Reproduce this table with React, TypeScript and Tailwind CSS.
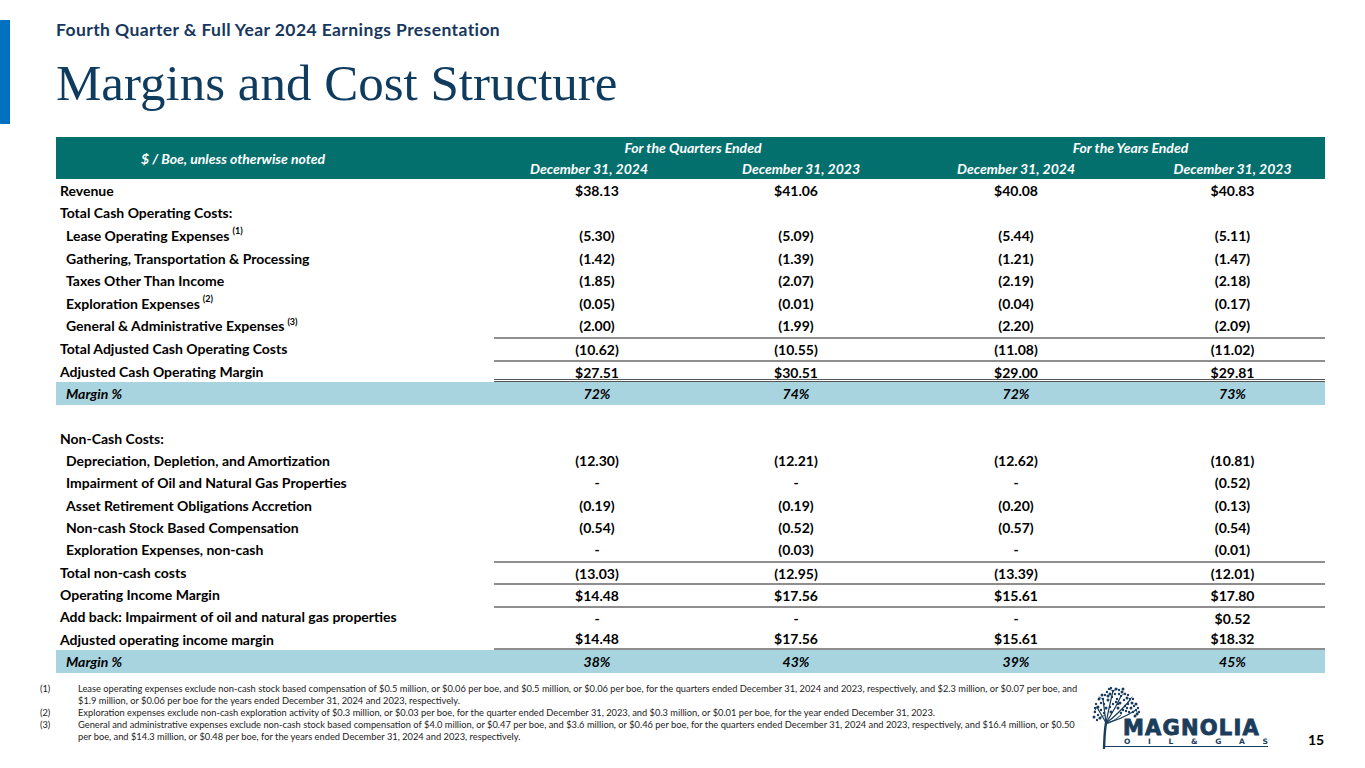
import React from "react";

type Row =
  | { kind: "data"; label: string; sup?: string; indent?: boolean; vals: string[]; top?: boolean; dbl?: boolean; bottom?: boolean; h: string }
  | { kind: "band"; vals: string[]; h: string }
  | { kind: "blank"; h: string };

const A = "h-[22.6px]";
const B = "h-[22.3px]";

const rows: Row[] = [
  { kind: "data", label: "Revenue", vals: ["$38.13", "$41.06", "$40.08", "$40.83"], h: A },
  { kind: "data", label: "Total Cash Operating Costs:", vals: ["", "", "", ""], h: A },
  { kind: "data", label: "Lease Operating Expenses", sup: "(1)", indent: true, vals: ["(5.30)", "(5.09)", "(5.44)", "(5.11)"], h: A },
  { kind: "data", label: "Gathering, Transportation & Processing", indent: true, vals: ["(1.42)", "(1.39)", "(1.21)", "(1.47)"], h: A },
  { kind: "data", label: "Taxes Other Than Income", indent: true, vals: ["(1.85)", "(2.07)", "(2.19)", "(2.18)"], h: A },
  { kind: "data", label: "Exploration Expenses", sup: "(2)", indent: true, vals: ["(0.05)", "(0.01)", "(0.04)", "(0.17)"], h: A },
  { kind: "data", label: "General & Administrative Expenses", sup: "(3)", indent: true, vals: ["(2.00)", "(1.99)", "(2.20)", "(2.09)"], h: A },
  { kind: "data", label: "Total Adjusted Cash Operating Costs", top: true, vals: ["(10.62)", "(10.55)", "(11.08)", "(11.02)"], h: A },
  { kind: "data", label: "Adjusted Cash Operating Margin", top: true, dbl: true, vals: ["$27.51", "$30.51", "$29.00", "$29.81"], h: A },
  { kind: "band", vals: ["72%", "74%", "72%", "73%"], h: A },
  { kind: "blank", h: B },
  { kind: "data", label: "Non-Cash Costs:", vals: ["", "", "", ""], h: B },
  { kind: "data", label: "Depreciation, Depletion, and Amortization", indent: true, vals: ["(12.30)", "(12.21)", "(12.62)", "(10.81)"], h: B },
  { kind: "data", label: "Impairment of Oil and Natural Gas Properties", indent: true, vals: ["-", "-", "-", "(0.52)"], h: B },
  { kind: "data", label: "Asset Retirement Obligations Accretion", indent: true, vals: ["(0.19)", "(0.19)", "(0.20)", "(0.13)"], h: B },
  { kind: "data", label: "Non-cash Stock Based Compensation", indent: true, vals: ["(0.54)", "(0.52)", "(0.57)", "(0.54)"], h: B },
  { kind: "data", label: "Exploration Expenses, non-cash", indent: true, vals: ["-", "(0.03)", "-", "(0.01)"], h: B },
  { kind: "data", label: "Total non-cash costs", top: true, vals: ["(13.03)", "(12.95)", "(13.39)", "(12.01)"], h: B },
  { kind: "data", label: "Operating Income Margin", top: true, vals: ["$14.48", "$17.56", "$15.61", "$17.80"], h: B },
  { kind: "data", label: "Add back: Impairment of oil and natural gas properties", top: true, vals: ["-", "-", "-", "$0.52"], h: B },
  { kind: "data", label: "Adjusted operating income margin", bottom: true, vals: ["$14.48", "$17.56", "$15.61", "$18.32"], h: B },
  { kind: "band", vals: ["38%", "43%", "39%", "45%"], h: B },
];

const COLS = "grid grid-cols-[206px_192px_248px_185px]";

function Tree() {
  const dots: [number, number][] = [
    [6, 20], [3, 25], [6, 28], [2, 30], [9, 16], [11, 12], [7, 12], [13, 8], [15, 5], [18, 7], [17, 2], [21, 4], [24, 2], [23, 7],
    [27, 3], [30, 5], [29, 9], [33, 7], [35, 11], [32, 13], [38, 12], [40, 16], [36, 17], [42, 19], [39, 21], [44, 23], [41, 25],
    [45, 27], [37, 25], [12, 17], [16, 13], [20, 10], [25, 12], [28, 16], [33, 19], [21, 17], [26, 21], [31, 23], [9, 23], [14, 21],
    [18, 20], [34, 24], [43, 29], [47, 25], [5, 33], [8, 31], [24, 15], [12, 26], [19, 25], [29, 26],
    [4, 17], [10, 8], [19, 1], [27, 7], [31, 2], [36, 8], [41, 12], [44, 17], [46, 21], [3, 21], [16, 9], [26, 17], [35, 21],
  ];
  return (
    <svg width="50" height="62" viewBox="0 0 50 62" fill="none">
      <g stroke="#1b3d5c" strokeLinecap="round">
        <path d="M12 61 C12.5 52 12.5 44 14 36" strokeWidth="2.4" />
        <path d="M14 36 C11 30 8 26 5 20" strokeWidth="1.2" />
        <path d="M14 36 C13 28 12 20 11 12" strokeWidth="1.2" />
        <path d="M14 36 C16 26 18 16 21 4" strokeWidth="1.2" />
        <path d="M14 36 C19 28 24 20 29 9" strokeWidth="1.2" />
        <path d="M14 36 C21 31 29 24 38 13" strokeWidth="1.2" />
        <path d="M14 36 C23 34 33 30 44 23" strokeWidth="1.2" />
        <path d="M14 37 C18 36 23 33 29 28" strokeWidth="1" />
        <path d="M11 12 L7 10 M21 4 L17 2 M21 4 L25 2 M29 9 L33 6 M38 13 L40 10 M44 23 L46 27 M5 20 L2 25 M13 28 L7 31" strokeWidth="0.8" />
      </g>
      <g fill="#1b3d5c">
        {dots.map(([x, y], i) => (
          <circle key={i} cx={x} cy={y} r={i % 3 === 0 ? 1.5 : 1.2} />
        ))}
      </g>
    </svg>
  );
}

export default function App() {
  const f = { fontFamily: "Lato, 'Open Sans', sans-serif" } as React.CSSProperties;
  return (
    <div className="w-[1365px] h-[768px] bg-white overflow-hidden flex flex-col" style={f}>
      {/* Header */}
      <div className="flex">
        <div className="w-[10px] h-[104px] mt-[20px] bg-[#0070C0]" />
        <div className="ml-[46px] flex flex-col">
          <div className="mt-[20px] h-[20px] leading-[20px] text-[17.5px] tracking-[0.4px] font-bold text-[#17375E] whitespace-nowrap">
            Fourth Quarter &amp; Full Year 2024 Earnings Presentation
          </div>
          <div
            className="mt-[14px] h-[58px] leading-[58px] text-[51px] text-[#0E3B5E] whitespace-nowrap"
            style={{ fontFamily: "'Liberation Serif', 'Times New Roman', serif" }}
          >
            Margins and Cost Structure
          </div>
        </div>
      </div>

      {/* Table */}
      <div className="ml-[56px] w-[1269px] mt-[13px] text-[14px] font-bold text-black">
        <div className="h-[42px] bg-[#03706E] text-white italic flex">
          <div className="w-[438px] pr-[84px] flex items-center justify-center">$ / Boe, unless otherwise noted</div>
          <div className="flex-1 flex flex-col">
            <div className="h-[21px] flex items-center">
              <div className="w-[398px] text-center">For the Quarters Ended</div>
              <div className="w-[433px] text-center pl-[44px]">For the Years Ended</div>
            </div>
            <div className={`h-[21px] items-center ${COLS}`}>
              <div className="text-center pr-[16px]">December 31, 2024</div>
              <div className="text-center pl-[10px]">December 31, 2023</div>
              <div className="text-center">December 31, 2024</div>
              <div className="text-center">December 31, 2023</div>
            </div>
          </div>
        </div>

        {rows.map((r, i) => {
          if (r.kind === "blank") return <div key={i} className={r.h} />;
          if (r.kind === "band")
            return (
              <div key={i} className={`${r.h} bg-[#A8D4E0] italic flex items-center`}>
                <div className="w-[438px] pl-[10px]">Margin %</div>
                <div className={`flex-1 ${COLS}`}>
                  {r.vals.map((v, j) => (
                    <div key={j} className="text-center">{v}</div>
                  ))}
                </div>
              </div>
            );
          const border = r.top ? "border-t-2 border-[#8e8e8e]" : "";
          const bot = r.dbl ? "border-b-[3px] border-double border-b-[#555555]" : r.bottom ? "border-b-2 border-b-[#8e8e8e]" : "";
          return (
            <div key={i} className={`${r.h} flex`}>
              <div className={`w-[438px] flex items-center whitespace-nowrap ${r.indent ? "pl-[10px]" : "pl-[4px]"}`}>
                {r.label}
                {r.sup && <sup className="text-[9px] ml-[3px] -top-[4px]">{r.sup}</sup>}
              </div>
              <div className={`flex-1 ${COLS} items-center ${border} ${bot}`}>
                {r.vals.map((v, j) => (
                  <div key={j} className="text-center">{v}</div>
                ))}
              </div>
            </div>
          );
        })}
      </div>

      {/* Footer */}
      <div className="flex mt-[10px]">
        <div className="ml-[40px] w-[1050px] text-[9.3px] leading-[12px] text-[#222222] whitespace-nowrap">
          <div className="flex">
            <div className="w-[38px]">(1)</div>
            <div>
              Lease operating expenses exclude non-cash stock based compensation of $0.5 million, or $0.06 per boe, and $0.5 million, or $0.06 per boe, for the quarters ended December 31, 2024 and 2023, respectively, and $2.3 million, or $0.07 per boe, and
              <br />
              $1.9 million, or $0.06 per boe for the years ended December 31, 2024 and 2023, respectively.
            </div>
          </div>
          <div className="flex">
            <div className="w-[38px]">(2)</div>
            <div>
              Exploration expenses exclude non-cash exploration activity of $0.3 million, or $0.03 per boe, for the quarter ended December 31, 2023, and $0.3 million, or $0.01 per boe, for the year ended December 31, 2023.
            </div>
          </div>
          <div className="flex">
            <div className="w-[38px]">(3)</div>
            <div>
              General and administrative expenses exclude non-cash stock based compensation of $4.0 million, or $0.47 per boe, and $3.6 million, or $0.46 per boe, for the quarters ended December 31, 2024 and 2023, respectively, and $16.4 million, or $0.50
              <br />
              per boe, and $14.3 million, or $0.48 per boe, for the years ended December 31, 2024 and 2023, respectively.
            </div>
          </div>
        </div>

        <div className="relative ml-[2px] mt-[4px] w-[180px] h-[62px]">
          <div className="absolute left-0 top-0">
            <Tree />
          </div>
          <div
            className="absolute left-[31px] top-[34px] text-[21px] leading-[15px] font-bold tracking-[1.2px] text-[#1b3d5c] [-webkit-text-stroke:0.9px_#1b3d5c]"
            style={{ fontFamily: "'DejaVu Sans', sans-serif" }}
          >
            MAGNOLIA
          </div>
          <div
            className="absolute left-[32px] top-[51px] w-[144px] flex justify-between text-[7.5px] leading-[7px] font-bold text-[#1b3d5c]"
            style={{ fontFamily: "'DejaVu Sans', sans-serif" }}
          >
            <span>O</span><span>I</span><span>L</span><span>&amp;</span><span>G</span><span>A</span><span>S</span>
          </div>
          <div className="absolute left-[12px] top-[59px] w-[164px] h-[1.5px] bg-[#1b3d5c]" />
        </div>
        <div className="ml-[36px] mt-[46px] text-[14px] font-bold text-black">15</div>
      </div>
    </div>
  );
}
